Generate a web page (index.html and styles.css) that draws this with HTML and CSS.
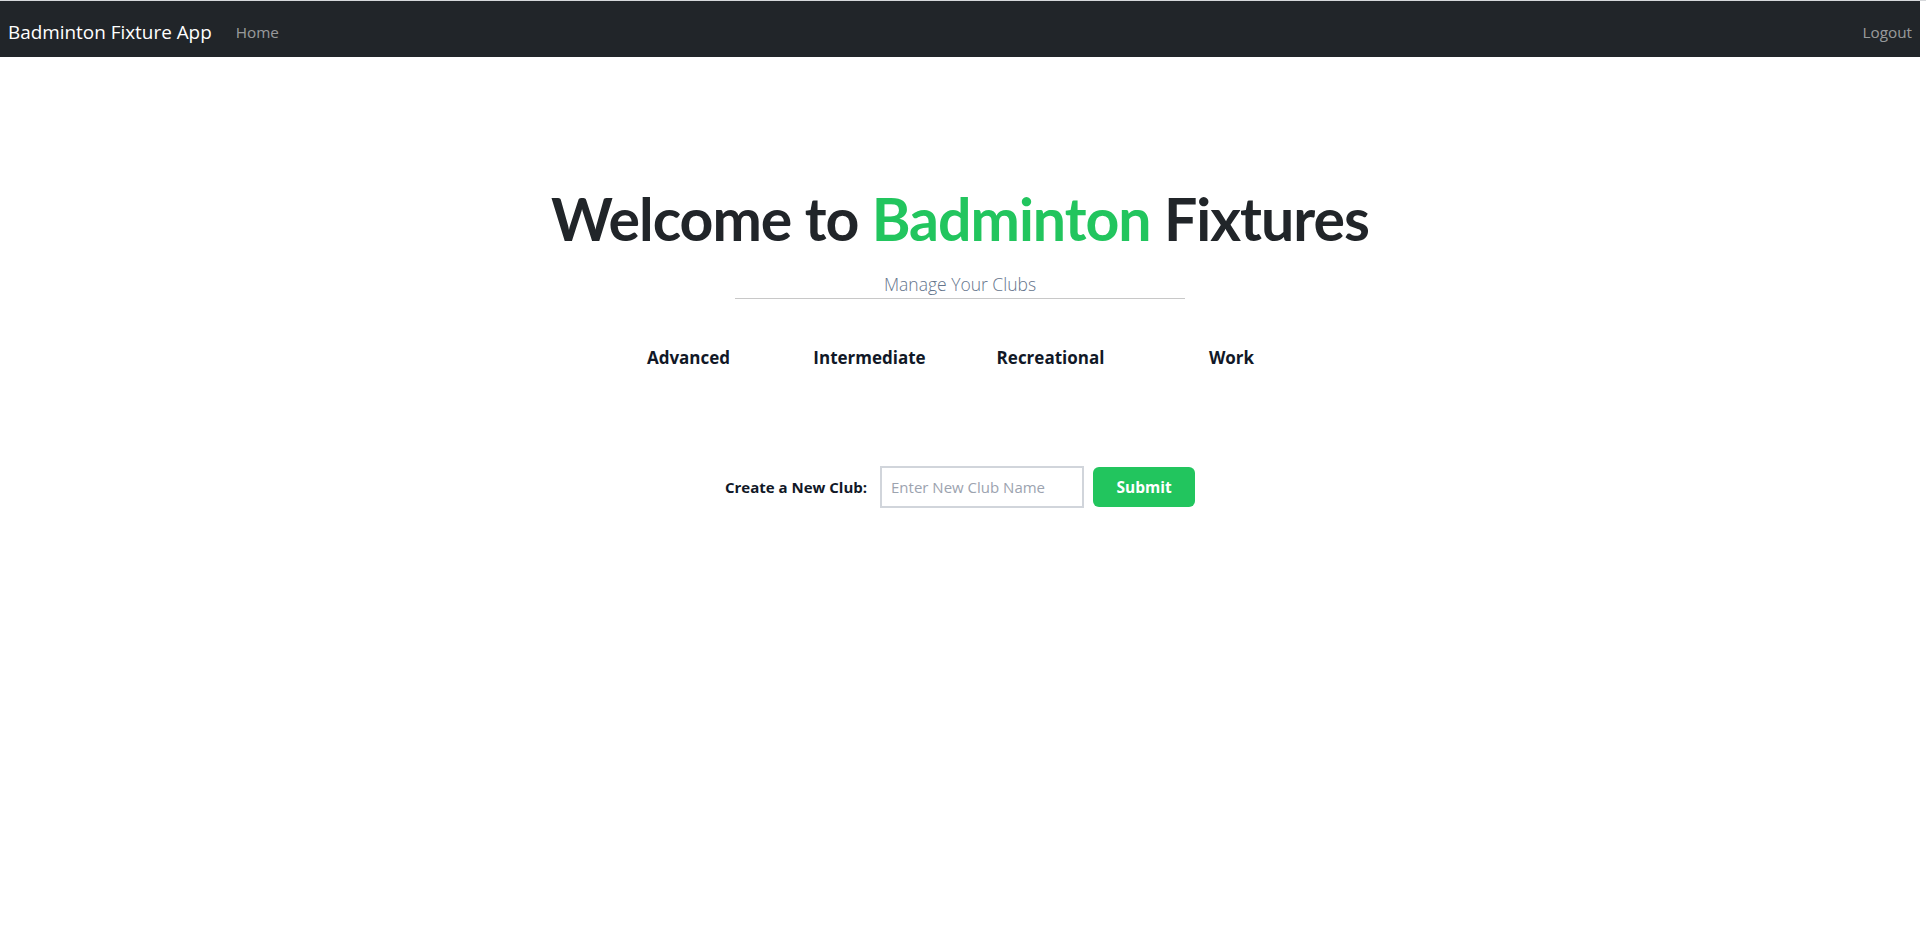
FILE: index.html
```html
<!DOCTYPE html>
<html lang="en">
<head>
<meta charset="utf-8">
<title>Badminton Fixture App</title>
<link rel="stylesheet" href="styles.css">
</head>
<body>
<div class="page">
  <nav class="navbar">
    <a class="brand" href="#">Badminton Fixture App</a>
    <a class="nav-link" href="#">Home</a>
    <a class="nav-link logout" href="#">Logout</a>
  </nav>
  <main class="main">
    <h1 class="title">Welcome to <span class="accent">Badminton</span> Fixtures</h1>
    <p class="subtitle">Manage Your Clubs</p>
    <hr class="divider">
    <div class="categories">
      <div class="category">Advanced</div>
      <div class="category">Intermediate</div>
      <div class="category">Recreational</div>
      <div class="category">Work</div>
    </div>
    <form class="club-form">
      <label class="club-label" for="club">Create a New Club:</label>
      <input class="club-input" id="club" type="text" placeholder="Enter New Club Name">
      <button class="club-btn" type="button">Submit</button>
    </form>
  </main>
</div>
</body>
</html>
```
FILE: styles.css
```css
html, body {
  margin: 0;
  padding: 0;
  background: #fff;
}
body {
  font-family: "Open Sans", "Noto Sans", sans-serif;
  color: #212529;
  border-top: 1px solid #d6d8db;
}
.page {
  width: 1920px;
}
.navbar {
  height: 56px;
  background: #212529;
  display: flex;
  align-items: center;
  padding: 5px 8px 0;
  box-sizing: border-box;
}
.brand {
  color: #fff;
  font-size: 18.9px;
  text-decoration: none;
  margin-right: 16px;
}
.nav-link {
  color: rgba(255,255,255,.55);
  font-size: 15.3px;
  text-decoration: none;
  padding: 8px;
}
.logout {
  margin-left: auto;
  padding-right: 0;
}
.main {
  display: flex;
  flex-direction: column;
  align-items: center;
}
.title {
  margin: 132px 0 0;
  font-family: Lato, "Open Sans", sans-serif;
  font-size: 59px;
  font-weight: 700;
  letter-spacing: -1px;
  line-height: 1;
}
.accent {
  color: #22c55e;
}
.subtitle {
  margin: 24px 0 0;
  font-size: 17.5px;
  font-weight: 300;
  color: #64748b;
  line-height: 1.4;
}
.divider {
  width: 450px;
  margin: 1px 0 0;
  border: 0;
  border-top: 1px solid #c8c8c8;
}
.categories {
  display: grid;
  grid-template-columns: repeat(4, 181px);
  margin-top: 47px;
}
.category {
  text-align: center;
  font-size: 17px;
  font-weight: 700;
  color: #111827;
  line-height: 24px;
}
.club-form {
  display: flex;
  align-items: center;
  margin-top: 96px;
}
.club-label {
  font-size: 15px;
  font-weight: 700;
  color: #111827;
  margin-right: 13px;
}
.club-input {
  width: 204px;
  height: 42px;
  box-sizing: border-box;
  border: 2px solid #d1d5db;
  padding: 0 9px;
  font-family: inherit;
  font-size: 15px;
  margin-right: 9px;
  outline: none;
}
.club-input::placeholder {
  color: #9ca3af;
}
.club-btn {
  width: 102px;
  height: 40px;
  background: #22c55e;
  color: #fff;
  border: 0;
  border-radius: 6px;
  font-family: inherit;
  font-size: 15.5px;
  font-weight: 700;
}
```
